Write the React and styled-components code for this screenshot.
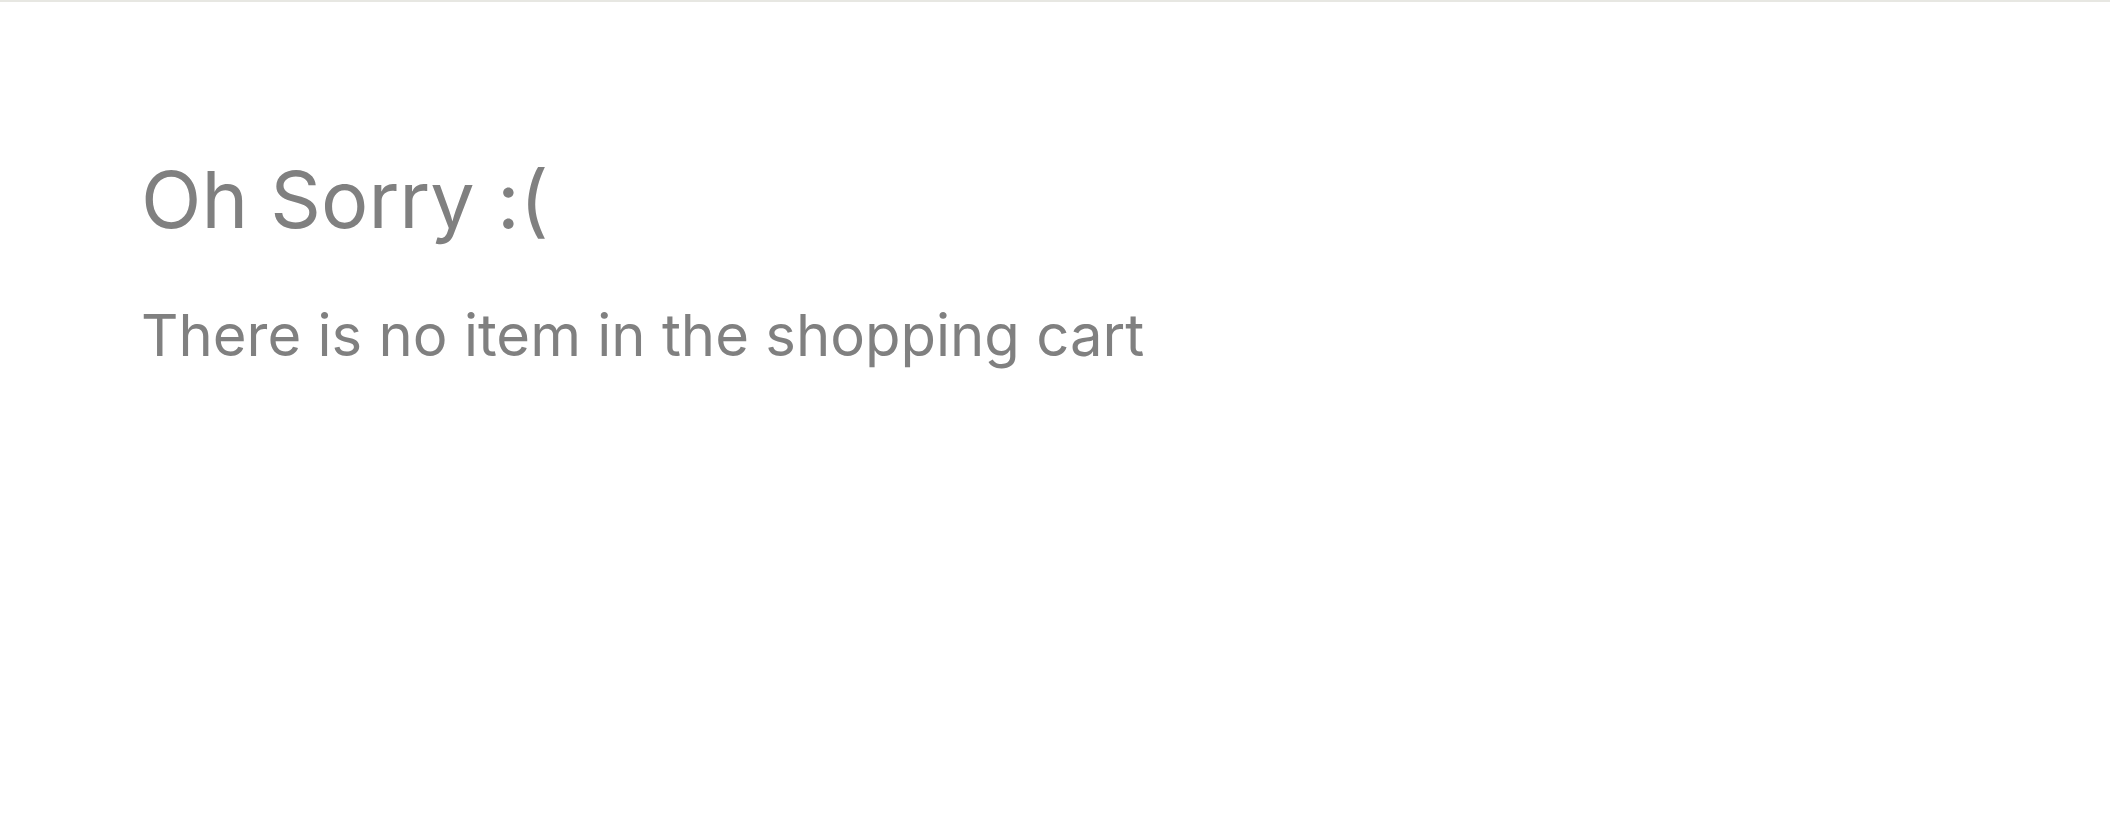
import React from "react";
import styled, { createGlobalStyle } from "styled-components";

const Global = createGlobalStyle`
  html, body { margin: 0; padding: 0; background: #ffffff; }
  body { font-family: Inter, "Noto Sans", sans-serif; }
`;

const Page = styled.div`
  min-height: 840px;
  border-top: 2px solid #e7e7e2;
  box-sizing: border-box;
  padding: 158px 0 0 141px;
  display: flex;
  flex-direction: column;
  gap: 67px;
`;

const Title = styled.h1`
  margin: 0;
  font-size: 79px;
  font-weight: 400;
  line-height: 1;
  color: #808080;
`;

const Message = styled.p`
  margin: 0;
  font-size: 58px;
  font-weight: 400;
  line-height: 1;
  color: #808080;
`;

export default function App() {
  return (
    <>
      <Global />
      <Page>
        <Title>Oh Sorry :(</Title>
        <Message>There is no item in the shopping cart</Message>
      </Page>
    </>
  );
}
